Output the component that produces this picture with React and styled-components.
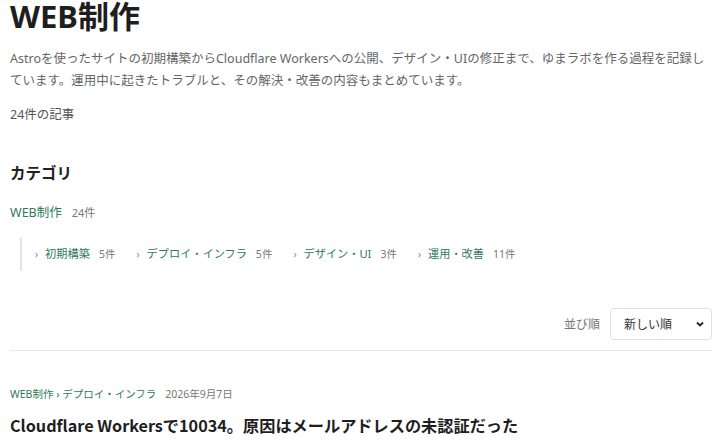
import React from 'react';
import styled, { createGlobalStyle } from 'styled-components';

const Global = createGlobalStyle`
  body {
    margin: 0;
    background: #fff;
    font-family: "Noto Sans", "Noto Sans CJK JP", sans-serif;
    color: #222;
  }
`;

const green = '#2f7a5a';

const Page = styled.div`
  padding: 0 8px 0 10px;
`;

const Title = styled.h1`
  margin: 0;
  font-size: 31px;
  line-height: 32px;
  font-weight: 700;
  color: #1e1e1e;
`;

const Lead = styled.p`
  margin: 16px 0 0;
  font-size: 12.5px;
  line-height: 22px;
  color: #666;
`;

const Count = styled.p`
  margin: 12px 0 0;
  font-size: 12.5px;
  line-height: 22px;
  color: #555;
`;

const SectionTitle = styled.h2`
  margin: 35px 0 0;
  font-size: 15.5px;
  line-height: 24px;
  font-weight: 700;
  color: #222;
`;

const CatRow = styled.div`
  margin-top: 16px;
  display: flex;
  align-items: baseline;
  gap: 10px;
  line-height: 24px;
`;

const CatLink = styled.a`
  color: ${green};
  font-size: ${(p) => p.size || 12.5}px;
  text-decoration: none;
`;

const Num = styled.span`
  font-size: ${(p) => p.size || 11}px;
  color: #777;
`;

const SubList = styled.ul`
  list-style: none;
  margin: 12px 0 0 10px;
  padding: 9px 0 9px 13px;
  border-left: 2px solid #e4e4e4;
  display: flex;
  gap: 21px;
`;

const SubItem = styled.li`
  display: flex;
  align-items: baseline;
  gap: 9px;
  line-height: 16px;
`;

const Chev = styled.span`
  font-size: 10px;
  color: #888;
  margin-right: -2px;
`;

const SortBar = styled.div`
  margin-top: 37px;
  display: flex;
  justify-content: flex-end;
  align-items: center;
  gap: 10px;
  padding-bottom: 10px;
  border-bottom: 1px solid #e6e6e6;
`;

const SortLabel = styled.label`
  font-size: 12px;
  color: #777;
`;

const Select = styled.div`
  width: 102px;
  height: 32px;
  box-sizing: border-box;
  border: 1px solid #e2e2e2;
  border-radius: 4px;
  display: flex;
  align-items: center;
  justify-content: space-between;
  padding: 0 6px 0 13px;
  font-size: 12px;
  color: #333;
`;

const Meta = styled.div`
  margin-top: 35px;
  display: flex;
  align-items: baseline;
  gap: 9px;
  font-size: 10.5px;
  line-height: 16px;
`;

const Crumb = styled.span`
  color: ${green};
`;

const Date = styled.span`
  color: #777;
`;

const PostTitle = styled.h3`
  margin: 11px 0 0;
  font-family: "Noto Sans CJK JP", sans-serif;
  font-size: 16.2px;
  line-height: 24px;
  font-weight: 700;
  color: #1e1e1e;
`;

const subs = [
  ['初期構築', 5],
  ['デプロイ・インフラ', 5],
  ['デザイン・UI', 3],
  ['運用・改善', 11],
];

export default function App() {
  return (
    <Page>
      <Global />
      <Title>WEB制作</Title>
      <Lead>
        Astroを使ったサイトの初期構築からCloudflare Workersへの公開、デザイン・UIの修正まで、ゆまラボを作る過程を記録しています。運用中に起きたトラブルと、その解決・改善の内容もまとめています。
      </Lead>
      <Count>24件の記事</Count>
      <SectionTitle>カテゴリ</SectionTitle>
      <CatRow>
        <CatLink size={12.5}>WEB制作</CatLink>
        <Num>24件</Num>
      </CatRow>
      <SubList>
        {subs.map(([name, n]) => (
          <SubItem key={name}>
            <Chev>›</Chev>
            <CatLink size={11.2}>{name}</CatLink>
            <Num size={10.5}>{n}件</Num>
          </SubItem>
        ))}
      </SubList>
      <SortBar>
        <SortLabel>並び順</SortLabel>
        <Select>
          新しい順
          <svg width="10" height="10" viewBox="0 0 10 10">
            <path d="M2 3.5 L5 6.5 L8 3.5" fill="none" stroke="#222" strokeWidth="1.8" />
          </svg>
        </Select>
      </SortBar>
      <Meta>
        <Crumb>WEB制作 › デプロイ・インフラ</Crumb>
        <Date>2026年9月7日</Date>
      </Meta>
      <PostTitle>Cloudflare Workersで10034。原因はメールアドレスの未認証だった</PostTitle>
    </Page>
  );
}
